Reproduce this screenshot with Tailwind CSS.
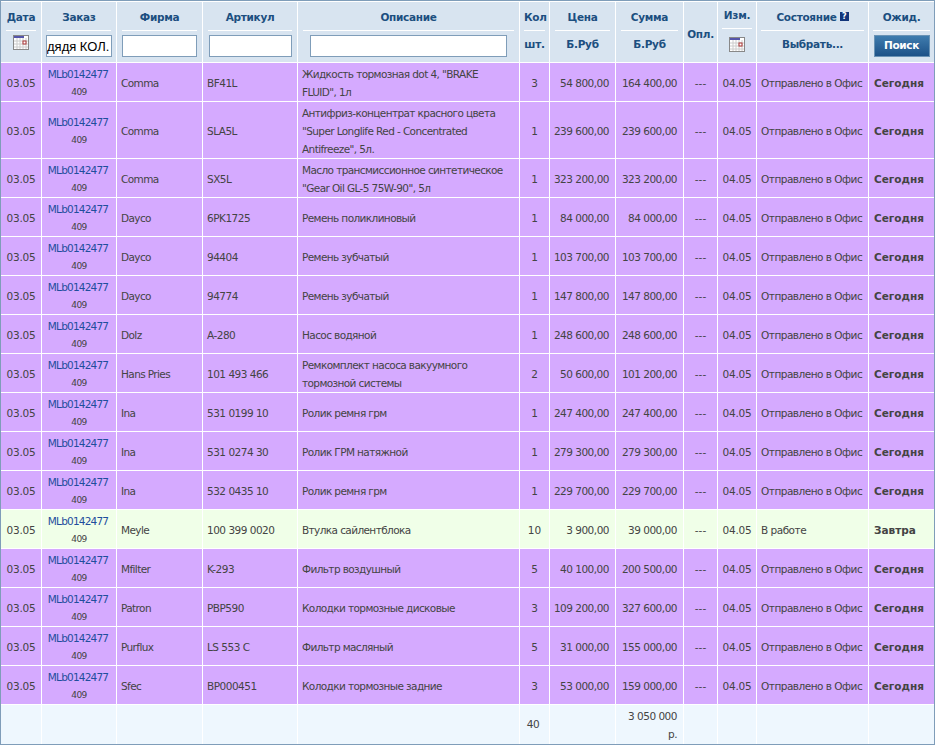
<!DOCTYPE html>
<html lang="ru">

<head>
    <meta charset="UTF-8">
    <meta name="viewport" content="width=device-width, initial-scale=1.0">
    <title>Заказы</title>
    <script src="https://cdn.jsdelivr.net/npm/@tailwindcss/browser@4"></script>
</head>

<body class="bg-white font-['DejaVu_Sans',sans-serif] text-[10.5px] text-[#444]">

    <div class="w-[935px] h-[745px] overflow-hidden border border-[#7f9db9] bg-[#eef7fe]">
        <table class="table-fixed border-separate border-spacing-0 w-[933px]">
            <colgroup>
                <col class="w-[41px]">
                <col class="w-[75px]">
                <col class="w-[86px]">
                <col class="w-[95px]">
                <col class="w-[222px]">
                <col class="w-[30px]">
                <col class="w-[66px]">
                <col class="w-[68px]">
                <col class="w-[34px]">
                <col class="w-[39px]">
                <col class="w-[112px]">
                <col class="w-[65px]">
            </colgroup>
            <thead>
                <tr class="h-[62px] bg-[#d8e4f0] text-[#1c4f80] text-[10.5px] font-bold tracking-[-0.3px]">
                    <th class="border-r border-b border-t border-white p-0 align-top">
                        <div class="mx-[5px] h-[29px] pt-[5px] border-b border-white leading-[20px]">Дата</div>
                        <svg class="mx-auto mt-[4px]" width="16" height="16" viewBox="0 0 16 16">
                            <rect x="0.5" y="0.5" width="15" height="14" fill="#fff" stroke="#888"></rect>
                            <rect x="1" y="1" width="10" height="2" fill="#5555aa"></rect>
                            <path d="M1 6h14M1 9h14M1 12h14M4 3v11M7 3v11M10 3v11M13 3v11" stroke="#ccc" fill="none"></path>
                            <rect x="10" y="6" width="3" height="3" fill="#fff" stroke="#a33"></rect>
                        </svg>
                    </th>
                    <th class="border-r border-b border-t border-white p-0 align-top">
                        <div class="mx-[5px] h-[29px] pt-[5px] border-b border-white leading-[20px]">Заказ</div>
                        <input value="дядя КОЛ." class="block mx-auto mt-[4px] w-[66px] h-[22px] bg-white border border-[#7f9db9] text-[13px] text-black font-normal tracking-normal font-['Liberation_Sans',sans-serif]">
                    </th>
                    <th class="border-r border-b border-t border-white p-0 align-top">
                        <div class="mx-[5px] h-[29px] pt-[5px] border-b border-white leading-[20px]">Фирма</div>
                        <input class="block mx-auto mt-[4px] w-[75px] h-[22px] bg-white border border-[#7f9db9]">
                    </th>
                    <th class="border-r border-b border-t border-white p-0 align-top">
                        <div class="mx-[5px] h-[29px] pt-[5px] border-b border-white leading-[20px]">Артикул</div>
                        <input class="block mx-auto mt-[4px] w-[83px] h-[22px] bg-white border border-[#7f9db9]">
                    </th>
                    <th class="border-r border-b border-t border-white p-0 align-top">
                        <div class="mx-[5px] h-[29px] pt-[5px] border-b border-white leading-[20px]">Описание</div>
                        <input class="block mx-auto mt-[4px] w-[197px] h-[22px] bg-white border border-[#7f9db9]">
                    </th>
                    <th class="border-r border-b border-t border-white p-0 align-top">
                        <div class="mx-[4px] h-[29px] pt-[5px] border-b border-white leading-[20px]">Кол</div>
                        <div class="mt-[2px] leading-[22px]">шт.</div>
                    </th>
                    <th class="border-r border-b border-t border-white p-0 align-top">
                        <div class="mx-[5px] h-[29px] pt-[5px] border-b border-white leading-[20px]">Цена</div>
                        <div class="mt-[2px] leading-[22px]">Б.Руб</div>
                    </th>
                    <th class="border-r border-b border-t border-white p-0 align-top">
                        <div class="mx-[5px] h-[29px] pt-[5px] border-b border-white leading-[20px]">Сумма</div>
                        <div class="mt-[2px] leading-[22px]">Б.Руб</div>
                    </th>
                    <th class="border-r border-b border-t border-white p-0 pt-[6px] align-middle">Опл.</th>
                    <th class="border-r border-b border-t border-white p-0 align-top">
                        <div class="mx-[4px] h-[27px] pt-[3px] border-b border-white leading-[20px]">Изм.</div>
                        <svg class="mx-auto mt-[8px]" width="16" height="16" viewBox="0 0 16 16">
                            <rect x="0.5" y="0.5" width="15" height="14" fill="#fff" stroke="#888"></rect>
                            <rect x="1" y="1" width="10" height="2" fill="#5555aa"></rect>
                            <path d="M1 6h14M1 9h14M1 12h14M4 3v11M7 3v11M10 3v11M13 3v11" stroke="#ccc" fill="none"></path>
                            <rect x="10" y="6" width="3" height="3" fill="#fff" stroke="#a33"></rect>
                        </svg>
                    </th>
                    <th class="border-r border-b border-t border-white p-0 align-top">
                        <div class="mx-[4px] h-[29px] pt-[5px] border-b border-white leading-[20px] flex items-start justify-center gap-[3px]">
                            Состояние
                            <span class="inline-block mt-[5px] w-[9px] h-[9px] bg-[#12357a] text-white text-[8px] leading-[9px]">?</span>
                        </div>
                        <div class="mt-[2px] leading-[22px]">Выбрать...</div>
                    </th>
                    <th class="border-b border-t border-white p-0 align-top">
                        <div class="mx-[4px] h-[29px] pt-[5px] border-b border-white leading-[20px]">Ожид.</div>
                        <button class="block mx-auto mt-[4px] w-[56px] h-[22px] bg-gradient-to-b from-[#3f7cae] to-[#1d5288] border border-[#6a93b5] text-white text-[10.5px] font-bold">Поиск</button>
                    </th>
                </tr>
            </thead>
            <tbody id="rows"></tbody>
            <tfoot>
                <tr class="h-[39px] text-center tracking-[-0.5px]">
                    <td class="border-r border-white"></td>
                    <td class="border-r border-white"></td>
                    <td class="border-r border-white"></td>
                    <td class="border-r border-white"></td>
                    <td class="border-r border-white"></td>
                    <td class="border-r border-white pt-[1px] pr-[3px]">40</td>
                    <td class="border-r border-white"></td>
                    <td class="border-r border-white text-right pr-[6px] leading-[18px]">3&nbsp;050&nbsp;000<br>р.</td>
                    <td class="border-r border-white"></td>
                    <td class="border-r border-white"></td>
                    <td class="border-r border-white"></td>
                    <td></td>
                </tr>
            </tfoot>
        </table>
    </div>

    <script>
        var data = [
            ["Comma", "BF41L", "Жидкость тормозная dot 4, \"BRAKE<br>FLUID\", 1л", 3, "54 800,00", "164 400,00"],
            ["Comma", "SLA5L", "Антифриз-концентрат красного цвета \"Super Longlife Red - Concentrated Antifreeze\", 5л.", 1, "239 600,00", "239 600,00"],
            ["Comma", "SX5L", "Масло трансмиссионное синтетическое \"Gear Oil GL-5 75W-90\", 5л", 1, "323 200,00", "323 200,00"],
            ["Dayco", "6PK1725", "Ремень поликлиновый", 1, "84 000,00", "84 000,00"],
            ["Dayco", "94404", "Ремень зубчатый", 1, "103 700,00", "103 700,00"],
            ["Dayco", "94774", "Ремень зубчатый", 1, "147 800,00", "147 800,00"],
            ["Dolz", "A-280", "Насос водяной", 1, "248 600,00", "248 600,00"],
            ["Hans Pries", "101 493 466", "Ремкомплект насоса вакуумного тормозной системы", 2, "50 600,00", "101 200,00"],
            ["Ina", "531 0199 10", "Ролик ремня грм", 1, "247 400,00", "247 400,00"],
            ["Ina", "531 0274 30", "Ролик ГРМ натяжной", 1, "279 300,00", "279 300,00"],
            ["Ina", "532 0435 10", "Ролик ремня грм", 1, "229 700,00", "229 700,00"],
            ["Meyle", "100 399 0020", "Втулка сайлентблока", 10, "3 900,00", "39 000,00", 1],
            ["Mfilter", "K-293", "Фильтр воздушный", 5, "40 100,00", "200 500,00"],
            ["Patron", "PBP590", "Колодки тормозные дисковые", 3, "109 200,00", "327 600,00"],
            ["Purflux", "LS 553 C", "Фильтр масляный", 5, "31 000,00", "155 000,00"],
            ["Sfec", "BP000451", "Колодки тормозные задние", 3, "53 000,00", "159 000,00"]
        ];
        var cell = "border-r border-b border-white px-[4px] pt-[2px] pb-0 leading-[18px] ";
        var num = "border-r border-b border-white pl-0 pr-[6px] pt-[2px] pb-0 leading-[18px] text-right whitespace-nowrap tracking-[-0.5px]";
        var html = "";
        data.forEach(function (r) {
            var green = r[6];
            html += '<tr class="h-[39px] ' + (green ? 'bg-[#f0ffe8]' : 'bg-[#d5aaff]') + '">'
                + '<td class="' + cell + 'text-center tracking-[-0.2px]">03.05</td>'
                + '<td class="border-r border-b border-white pl-[3px] pr-[5px] pt-[2px] pb-0 leading-[18px] text-center"><a class="block text-[#1f4e9c] tracking-[-0.8px]">MLb0142477</a><div class="text-[9px] tracking-[-0.5px] pl-[2px]">409</div></td>'
                + '<td class="' + cell + 'tracking-[-0.6px]">' + r[0] + '</td>'
                + '<td class="' + cell + 'tracking-[-0.5px]">' + r[1] + '</td>'
                + '<td class="' + cell + 'tracking-[-0.6px]">' + r[2] + '</td>'
                + '<td class="' + cell + 'text-center">' + r[3] + '</td>'
                + '<td class="' + num + '">' + r[4] + '</td>'
                + '<td class="' + num + '">' + r[5] + '</td>'
                + '<td class="' + cell + 'text-center">---</td>'
                + '<td class="' + cell + 'text-center tracking-[-0.2px]">04.05</td>'
                + '<td class="' + cell + 'whitespace-nowrap tracking-[-0.5px]">' + (green ? 'В работе' : 'Отправлено в Офис') + '</td>'
                + '<td class="border-b border-white px-[5px] pt-[2px] pb-0 leading-[18px] font-bold">' + (green ? 'Завтра' : 'Сегодня') + '</td>'
                + '</tr>';
        });
        document.getElementById("rows").innerHTML = html;
    </script>

</body>

</html>
